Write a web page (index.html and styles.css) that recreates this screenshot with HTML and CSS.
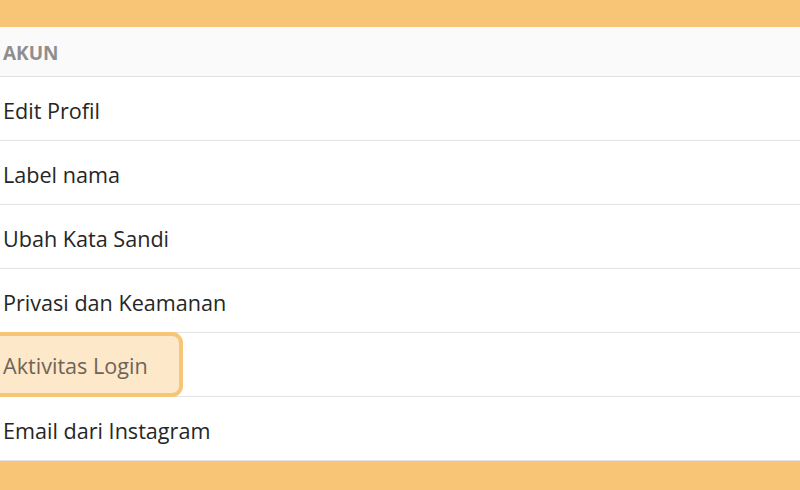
FILE: index.html
```html
<!DOCTYPE html>
<html lang="en">
<head>
    <meta charset="UTF-8">
    <title>Pengaturan Akun</title>
    <link rel="stylesheet" href="styles.css">
</head>
<body>
    <div class="bar"></div>
    <div class="menu">
        <div class="menu-header">AKUN</div>
        <div class="menu-item">Edit Profil</div>
        <div class="menu-item">Label nama</div>
        <div class="menu-item">Ubah Kata Sandi</div>
        <div class="menu-item">Privasi dan Keamanan</div>
        <div class="menu-item active"><span class="highlight">Aktivitas Login</span></div>
        <div class="menu-item">Email dari Instagram</div>
    </div>
    <div class="bar bottom"></div>
</body>
</html>
```

FILE: styles.css
```css
:root {
    --orange: #F8C576;
    --orange-light: #FDE8C9;
    --line: #E3E3E3;
}

* {
    margin: 0;
    padding: 0;
    box-sizing: border-box;
}

body {
    font-family: "Open Sans", "Noto Sans", sans-serif;
    background-color: #FFFFFF;
    color: #262626;
    overflow: hidden;
}

.bar {
    height: 27px;
    background-color: var(--orange);
}

.bar.bottom {
    height: 40px;
}

.menu-header {
    height: 50px;
    padding: 2px 0 0 3px;
    display: flex;
    align-items: center;
    background-color: #FAFAFA;
    border-bottom: 1px solid var(--line);
    color: #8E8E8E;
    font-weight: 700;
    font-size: 19px;
}

.menu-item {
    height: 64px;
    padding: 3px 0 0 3px;
    display: flex;
    align-items: center;
    border-bottom: 1px solid var(--line);
    font-size: 21.6px;
}

.menu-item.active {
    padding: 0;
}

.highlight {
    display: flex;
    align-items: center;
    height: 65px;
    margin: -1px 0 0 -10px;
    padding: 3px 31px 0 9px;
    background-color: var(--orange-light);
    border: 4px solid var(--orange);
    border-radius: 11px;
    color: #6E6458;
}
```
